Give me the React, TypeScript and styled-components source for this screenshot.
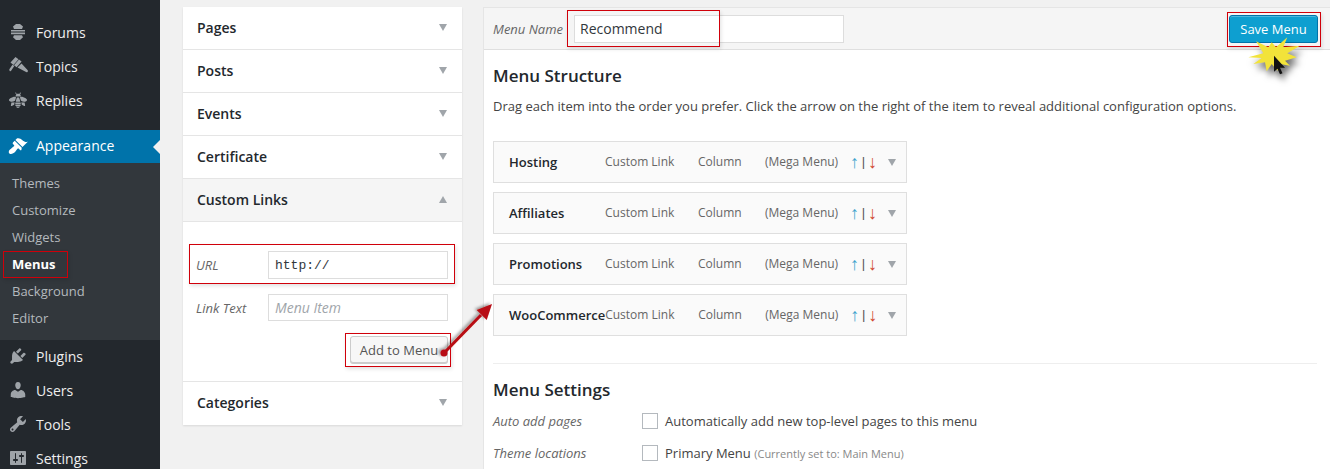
import React from 'react';
import styled, { createGlobalStyle } from 'styled-components';

const GlobalStyle = createGlobalStyle`
  html, body {
    margin: 0;
    padding: 0;
    background: #f1f1f1;
  }
  * {
    box-sizing: border-box;
  }
`;

const DASH = {
  appearance:
    'M14.48 11.06L7.41 3.99l1.5-1.5c.5-.56 2.3-.47 3.51.32 1.21.8 1.43 1.28 2.91 2.1 1.18.64 2.45 1.26 4.45.85zm-.71.71L6.7 4.7 4.93 6.47c-.39.39-.39 1.02 0 1.41l1.06 1.06c.39.39.39 1.03 0 1.42-.6.6-1.43 1.11-2.21 1.69-.35.26-.7.53-1.01.84C1.43 13.23 0 16 1.43 17.43c1.42 1.43 4.2 0 5.55-1.35.31-.31.58-.66.84-1.01.58-.78 1.09-1.61 1.69-2.21.39-.39 1.03-.39 1.42 0l1.06 1.06c.39.39 1.02.39 1.41 0z',
  plugins:
    'M13.11 4.36L9.87 7.6 8 5.73l3.24-3.24c.35-.34 1.05-.2 1.56.32.52.51.66 1.21.31 1.55zm-8 1.77l.91-1.12 9.01 9.01-1.19.84c-.71.71-2.63 1.16-3.82 1.16H6.14L4.9 17.26c-.59.59-1.54.59-2.12 0-.59-.58-.59-1.53 0-2.12l1.24-1.24v-3.88c0-1.13.4-3.19 1.09-3.89zm7.26 3.97l3.24-3.24c.34-.35 1.04-.21 1.55.31.52.51.66 1.21.31 1.55l-3.24 3.25z',
  users:
    'M10 9.25c-2.27 0-2.73-3.44-2.73-3.44C7 4.02 7.82 2 9.97 2c2.16 0 2.98 2.02 2.71 3.81 0 0-.41 3.44-2.68 3.44zm0 2.57L12.72 10c2.39 0 4.52 2.33 4.52 4.53v2.49s-3.65 1.13-7.24 1.13c-3.65 0-7.24-1.13-7.24-1.13v-2.49c0-2.25 1.94-4.48 4.47-4.48z',
  tools:
    'M16.68 9.77c-1.34 1.34-3.3 1.67-4.95.99l-5.41 6.52c-.99.99-2.59.99-3.58 0s-.99-2.59 0-3.57l6.52-5.42c-.68-1.65-.35-3.61.99-4.95 1.28-1.28 3.12-1.62 4.72-1.06l-2.89 2.89 2.82 2.82 2.86-2.87c.53 1.58.18 3.39-1.08 4.65zM3.81 16.21c.4.39 1.04.39 1.43 0 .4-.4.4-1.04 0-1.43-.39-.4-1.03-.4-1.43 0-.39.39-.39 1.03 0 1.43z',
  settings:
    'M18 16V4c0-.55-.45-1-1-1H3c-.55 0-1 .45-1 1v12c0 .55.45 1 1 1h14c.55 0 1-.45 1-1zM8 11h1c.55 0 1 .45 1 1s-.45 1-1 1H8v1.5c0 .28-.22.5-.5.5s-.5-.22-.5-.5V13H6c-.55 0-1-.45-1-1s.45-1 1-1h1V5.5c0-.28.22-.5.5-.5s.5.22.5.5V11zm5-2h-1c-.55 0-1-.45-1-1s.45-1 1-1h1V5.5c0-.28.22-.5.5-.5s.5.22.5.5V7h1c.55 0 1 .45 1 1s-.45 1-1 1h-1v5.5c0 .28-.22.5-.5.5s-.5-.22-.5-.5V9z',
  forums:
    'M8 2h4l3 2.500-1 2.500H6L5 4.500zM3 8h14v1.600H3zM3 10.600h14v1.600H3zM6 13.200h8l1 2-3 2.800H8l-3-2.800z',
  topics:
    'M2.500 6.500L7.500 1l3 2.200-5 5.800zM6 9.200l5-5.700 2.600 2-5 5.800zM1.500 13l3-4.200 1.800 1.300-3 4.500c-.5.700-1.200.700-1.600.300-.4-.4-.6-1.200-.2-1.900zM9.500 11.500l4-4 6 6.500c.6.700.5 1.400 0 1.900s-1.300.500-1.900-.1z',
  replies:
    'M7.300 2.800c.3-.4.800-.3.900.2l.4 1.100c.9-.4 2-.4 2.800 0l.4-1.100c.2-.5.700-.6.900-.2.200.3.100.7-.1 1l-.5.900c.5.400.8 1.100.9 1.900H7.400c.1-.8.400-1.500.9-1.900l-.5-.9c-.2-.3-.8-.7-.5-1zM5.800 6.800c1-.3 2 0 2.300.7L7 10.700c-1.400.9-3.200 1.400-4.600.9-1.700-.6-1.700-1.800-.9-2.500.9-.9 2.700-1.900 4.300-2.300zM14.200 6.800c1.600.4 3.400 1.400 4.300 2.300.8.700.8 1.900-.9 2.500-1.400.5-3.200 0-4.600-.9l-1.100-3.200c.3-.7 1.300-1 2.300-.7zM8.900 7.500h2.200l1 3.200v1H7.900v-1zM7.400 12.500h5.200l.2 1.400H7.200zM3.400 12.400c.9.200 2.100.1 3.200-.2l-.4 2.500-2.400 1.300c-.6.300-1.100-.2-.9-.8zM16.600 12.400l.5 2.800c.2.600-.3 1.100-.9.800l-2.400-1.300-.4-2.500c1.100.3 2.300.4 3.200.2zM7.300 14.600h5.400l-.2 1.300H7.500zM7.900 16.600h4.200C11.700 17.500 10.900 18 10 18s-1.700-.5-2.100-1.400z',
};

const menuGroupOne = [
  { name: 'Forums', icon: DASH.forums },
  { name: 'Topics', icon: DASH.topics },
  { name: 'Replies', icon: DASH.replies },
];

const menuGroupTwo = [
  { name: 'Plugins', icon: DASH.plugins },
  { name: 'Users', icon: DASH.users },
  { name: 'Tools', icon: DASH.tools },
  { name: 'Settings', icon: DASH.settings },
];

const subItems = ['Themes', 'Customize', 'Widgets', 'Menus', 'Background', 'Editor'];
const closedBoxes = ['Pages', 'Posts', 'Events', 'Certificate'];
const structure = ['Hosting', 'Affiliates', 'Promotions', 'WooCommerce'];

const burstPoints =
  '3.3,23.3 18.3,19.3 11,7.3 23.3,13.3 26.7,8.3 31,13.3 42.3,3.3 38.3,13.3 55,11.7 42.3,19.3 51.7,23.3 40,26.7 45,31.7 35,30 32.3,36.7 26.7,30 21.7,37.3 20,28.3 8.3,30 16.7,24';

const App = () => {
  return (
    <Page>
      <GlobalStyle />
      <Sidebar>
        {menuGroupOne.map((item) => (
          <MenuItem key={item.name}>
            <MenuIcon viewBox="0 0 20 20">
              <path d={item.icon} />
            </MenuIcon>
            {item.name}
          </MenuItem>
        ))}
        <ActiveItem>
          <MenuIcon viewBox="0 0 20 20" $active>
            <path d={DASH.appearance} />
          </MenuIcon>
          Appearance
          <ActiveNotch />
        </ActiveItem>
        <SubMenu>
          {subItems.map((item) => (
            <SubItem key={item} $current={item === 'Menus'}>
              {item}
              {item === 'Menus' && <Highlight $t={0} $l={3} $w={65} $h={27} />}
            </SubItem>
          ))}
        </SubMenu>
        {menuGroupTwo.map((item) => (
          <MenuItem key={item.name}>
            <MenuIcon viewBox="0 0 20 20">
              <path d={item.icon} />
            </MenuIcon>
            {item.name}
          </MenuItem>
        ))}
      </Sidebar>

      <LeftColumn>
        {closedBoxes.map((box) => (
          <BoxHeader key={box}>
            {box}
            <Caret />
          </BoxHeader>
        ))}
        <BoxHeader $open>
          Custom Links
          <Caret $up />
        </BoxHeader>
        <LinkForm>
          <FieldRow>
            <FieldLabel>URL</FieldLabel>
            <UrlInput readOnly value="http://" />
            <Highlight $t={-7} $r={-7} $b={-5} $l={-7} />
          </FieldRow>
          <FieldRow>
            <FieldLabel>Link Text</FieldLabel>
            <TextInput readOnly placeholder="Menu Item" />
          </FieldRow>
          <FormActions>
            <PlainButton>
              Add to Menu
              <Highlight $t={-4} $r={-4} $b={-5} $l={-6} />
            </PlainButton>
          </FormActions>
        </LinkForm>
        <BoxHeader $last>
          Categories
          <Caret />
        </BoxHeader>
      </LeftColumn>

      <EditorPanel>
        <EditorHeader>
          <NameLabel>Menu Name</NameLabel>
          <NameField>
            <NameInput readOnly value="Recommend" />
            <Highlight $t={-5} $l={-7} $w={153} $h={37} />
          </NameField>
          <SaveButton>
            Save Menu
            <Highlight $t={-4} $r={-4} $b={-5} $l={-3} />
            <Burst viewBox="0 0 60 40">
              <polygon points={burstPoints} fill="#f2e33a" />
              <path d="M29 21.700v16l3.500-3 2.500 5.500 2.500-1-2.500-5.500h5z" fill="#111" />
            </Burst>
          </SaveButton>
        </EditorHeader>
        <EditorBody>
          <SectionTitle>Menu Structure</SectionTitle>
          <Hint>
            Drag each item into the order you prefer. Click the arrow on the right of the item to reveal additional
            configuration options.
          </Hint>
          <ItemList>
            {structure.map((item) => (
              <ItemRow key={item}>
                <ItemName>{item}</ItemName>
                <ItemType>Custom Link</ItemType>
                <ItemColumn>Column</ItemColumn>
                <ItemMega>(Mega Menu)</ItemMega>
                <MoveArrows>
                  <MoveUp>↑</MoveUp>
                  <MoveBar>|</MoveBar>
                  <MoveDown>↓</MoveDown>
                </MoveArrows>
                <ItemCaret />
              </ItemRow>
            ))}
          </ItemList>
          <Divider />
          <SectionTitle $settings>Menu Settings</SectionTitle>
          <SettingRows>
            <SettingRow>
              <SettingLabel>Auto add pages</SettingLabel>
              <CheckBox />
              <SettingText>Automatically add new top-level pages to this menu</SettingText>
            </SettingRow>
            <SettingRow>
              <SettingLabel>Theme locations</SettingLabel>
              <CheckBox />
              <SettingText>
                Primary Menu <SettingNote>(Currently set to: Main Menu)</SettingNote>
              </SettingText>
            </SettingRow>
          </SettingRows>
        </EditorBody>
      </EditorPanel>

      <ArrowLayer viewBox="0 0 60 60">
        <defs>
          <filter id="arrowShadow" x="-30%" y="-30%" width="160%" height="160%">
            <feDropShadow dx="-2" dy="-1" stdDeviation="1.6" floodColor="#000" floodOpacity="0.4" />
          </filter>
        </defs>
        <g filter="url(#arrowShadow)">
          <line x1="6" y1="55" x2="43" y2="17" stroke="#b80b12" strokeWidth="3" />
          <polygon points="54,6 48.700,22 38.700,12" fill="#b80b12" />
          <circle cx="6" cy="55" r="3.500" fill="#b80b12" />
        </g>
      </ArrowLayer>
    </Page>
  );
};

export default App;

const Page = styled.div`
  position: relative;
  display: flex;
  align-items: flex-start;
  width: 1330px;
  height: 469px;
  overflow: hidden;
  background: #f1f1f1;
  font-family: 'Open Sans', 'Liberation Sans', sans-serif;
  font-size: 13px;
  color: #444;
`;

const Sidebar = styled.nav`
  flex: 0 0 160px;
  height: 469px;
  padding-top: 16px;
  background: #23282d;
`;

const MenuItem = styled.div`
  display: flex;
  align-items: center;
  height: 34px;
  padding: 0 0 2px 8px;
  font-size: 14px;
  color: #eee;
`;

const ActiveItem = styled(MenuItem)`
  position: relative;
  height: 33px;
  margin-top: 12px;
  background: #0073aa;
  color: #fff;
`;

const ActiveNotch = styled.span`
  position: absolute;
  right: 0;
  top: 10px;
  border-style: solid;
  border-width: 7px 7px 7px 0;
  border-color: transparent #f1f1f1 transparent transparent;
`;

const MenuIcon = styled.svg<{ $active?: boolean }>`
  flex: none;
  width: 20px;
  height: 20px;
  margin-right: 8px;
  fill: ${(p) => (p.$active ? '#fff' : '#9ea3a8')};
`;

const SubMenu = styled.div`
  padding: 7px 0 8px;
  background: #32373c;
`;

const SubItem = styled.div<{ $current?: boolean }>`
  position: relative;
  display: flex;
  align-items: center;
  height: 27px;
  padding: 0 0 2px 12px;
  font-size: 13px;
  font-weight: ${(p) => (p.$current ? 700 : 400)};
  color: ${(p) => (p.$current ? '#fff' : '#b4b9be')};
`;

const Highlight = styled.span<{ $t?: number; $r?: number; $b?: number; $l?: number; $w?: number; $h?: number }>`
  position: absolute;
  top: ${(p) => (p.$t !== undefined ? `${p.$t}px` : 'auto')};
  right: ${(p) => (p.$r !== undefined ? `${p.$r}px` : 'auto')};
  bottom: ${(p) => (p.$b !== undefined ? `${p.$b}px` : 'auto')};
  left: ${(p) => (p.$l !== undefined ? `${p.$l}px` : 'auto')};
  width: ${(p) => (p.$w ? `${p.$w}px` : 'auto')};
  height: ${(p) => (p.$h ? `${p.$h}px` : 'auto')};
  border: 1px solid #d0000a;
  box-shadow: 1px 2px 4px rgba(0, 0, 0, 0.12);
  pointer-events: none;
`;

const LeftColumn = styled.aside`
  flex: 0 0 279px;
  min-width: 0;
  margin: 7px 0 0 23px;
  background: #fff;
  box-shadow: 0 1px 2px rgba(0, 0, 0, 0.1);
`;

const BoxHeader = styled.div<{ $open?: boolean; $last?: boolean }>`
  position: relative;
  display: flex;
  align-items: center;
  justify-content: space-between;
  height: 43px;
  padding: 0 15px 2px 14px;
  font-size: 14px;
  font-weight: 600;
  color: #23282d;
  background: ${(p) => (p.$open ? '#f5f5f5' : '#fff')};
  border-bottom: ${(p) => (p.$last ? 'none' : '1px solid #e5e5e5')};
`;

const Caret = styled.span<{ $up?: boolean }>`
  width: 0;
  height: 0;
  border-left: 4px solid transparent;
  border-right: 4px solid transparent;
  border-top: ${(p) => (p.$up ? 'none' : '7px solid #a0a5aa')};
  border-bottom: ${(p) => (p.$up ? '7px solid #a0a5aa' : 'none')};
`;

const LinkForm = styled.div`
  padding: 29px 14px 18px 13px;
  border-bottom: 1px solid #e5e5e5;
`;

const FieldRow = styled.div`
  position: relative;
  display: flex;
  align-items: center;
  margin-bottom: 15px;
`;

const FieldLabel = styled.span`
  flex: 0 0 72px;
  font-size: 13px;
  font-style: italic;
  color: #666;
`;

const TextInput = styled.input`
  flex: 1;
  width: 100%;
  min-width: 0;
  height: 27px;
  padding: 0 6px;
  border: 1px solid #ddd;
  outline: none;
  font-family: inherit;
  font-size: 14px;
  font-style: italic;
  color: #32373c;
  &::placeholder {
    color: #a0a5aa;
  }
`;

const UrlInput = styled(TextInput)`
  height: 28px;
  font-family: 'Liberation Mono', 'DejaVu Sans Mono', monospace;
  font-size: 13px;
  font-style: normal;
`;

const FormActions = styled.div`
  display: flex;
  justify-content: flex-end;
`;

const PlainButton = styled.div`
  position: relative;
  display: flex;
  align-items: center;
  justify-content: center;
  width: 98px;
  height: 27px;
  border: 1px solid #ccc;
  border-radius: 3px;
  background: #f7f7f7;
  box-shadow: 0 1px 0 #ccc;
  font-size: 13px;
  color: #555;
`;

const EditorPanel = styled.main`
  flex: 1;
  min-width: 0;
  margin: 7px 0 0 21px;
  height: 462px;
  border-left: 1px solid #e5e5e5;
  border-top: 1px solid #e5e5e5;
  background: #fff;
`;

const EditorHeader = styled.header`
  display: flex;
  align-items: center;
  height: 42px;
  padding: 0 12px 0 9px;
  background: #f5f5f5;
  border-bottom: 1px solid #dfdfdf;
`;

const NameLabel = styled.span`
  margin-right: 11px;
  font-size: 13px;
  font-style: italic;
  color: #666;
`;

const NameField = styled.div`
  position: relative;
`;

const NameInput = styled.input`
  display: block;
  width: 270px;
  height: 28px;
  padding: 0 5px;
  border: 1px solid #ddd;
  outline: none;
  font-family: inherit;
  font-size: 14px;
  color: #32373c;
`;

const SaveButton = styled.div`
  position: relative;
  display: flex;
  align-items: center;
  justify-content: center;
  width: 89px;
  height: 28px;
  margin-left: auto;
  border: 1px solid #0073aa;
  border-radius: 3px;
  background: #0e9fd0;
  box-shadow: inset 0 1px 0 rgba(120, 200, 230, 0.6);
  font-size: 13px;
  color: #fff;
`;

const Burst = styled.svg`
  position: absolute;
  top: 18px;
  left: 15px;
  width: 60px;
  height: 40px;
  overflow: visible;
  filter: drop-shadow(3px 6px 3px rgba(0, 0, 0, 0.55));
  pointer-events: none;
`;

const EditorBody = styled.div`
  padding: 14px 13px 0 9px;
`;

const SectionTitle = styled.h3<{ $settings?: boolean }>`
  margin: ${(p) => (p.$settings ? '14px' : '0')} 0 0;
  font-size: 17px;
  line-height: 23px;
  font-weight: 600;
  color: #23282d;
`;

const Hint = styled.p`
  margin: 10px 0 0;
  font-size: 13px;
  line-height: 18px;
  color: #444;
`;

const ItemList = styled.div`
  display: flex;
  flex-direction: column;
  gap: 9px;
  margin-top: 26px;
`;

const ItemRow = styled.div`
  display: flex;
  align-items: center;
  width: 414px;
  height: 42px;
  padding-left: 15px;
  border: 1px solid #dfdfdf;
  background: #fafafa;
`;

const ItemName = styled.span`
  flex: 0 0 96px;
  font-size: 13px;
  font-weight: 600;
  color: #23282d;
`;

const ItemType = styled.span`
  flex: 0 0 93px;
  margin-bottom: 2px;
  font-size: 12px;
  color: #666;
`;

const ItemColumn = styled(ItemType)`
  flex-basis: 67px;
`;

const ItemMega = styled(ItemType)`
  flex-basis: 86px;
`;

const MoveArrows = styled.span`
  display: grid;
  grid-template-columns: repeat(3, 7px);
  column-gap: 2px;
  justify-items: center;
  align-items: center;
  font-family: 'Liberation Sans', sans-serif;
  font-size: 18px;
  line-height: 14px;
`;

const MoveUp = styled.span`
  color: #3aa3cc;
`;

const MoveBar = styled.span`
  font-size: 13px;
  color: #555;
`;

const MoveDown = styled.span`
  color: #d0482e;
`;

const ItemCaret = styled(Caret)`
  margin-left: 12px;
`;

const Divider = styled.hr`
  margin: 27px 0 0;
  border: none;
  border-top: 1px solid #eee;
`;

const SettingRows = styled.div`
  margin-top: 4px;
`;

const SettingRow = styled.div`
  display: flex;
  align-items: center;
  height: 32px;
`;

const SettingLabel = styled.span`
  flex: 0 0 149px;
  font-size: 13px;
  font-style: italic;
  color: #666;
`;

const CheckBox = styled.span`
  flex: none;
  width: 16px;
  height: 16px;
  margin-right: 7px;
  border: 1px solid #b4b9be;
  background: #fff;
`;

const SettingText = styled.span`
  font-size: 13px;
  color: #444;
`;

const SettingNote = styled.span`
  font-size: 11px;
  color: #888;
`;

const ArrowLayer = styled.svg`
  position: absolute;
  left: 438px;
  top: 298px;
  width: 60px;
  height: 60px;
  overflow: visible;
  pointer-events: none;
`;
